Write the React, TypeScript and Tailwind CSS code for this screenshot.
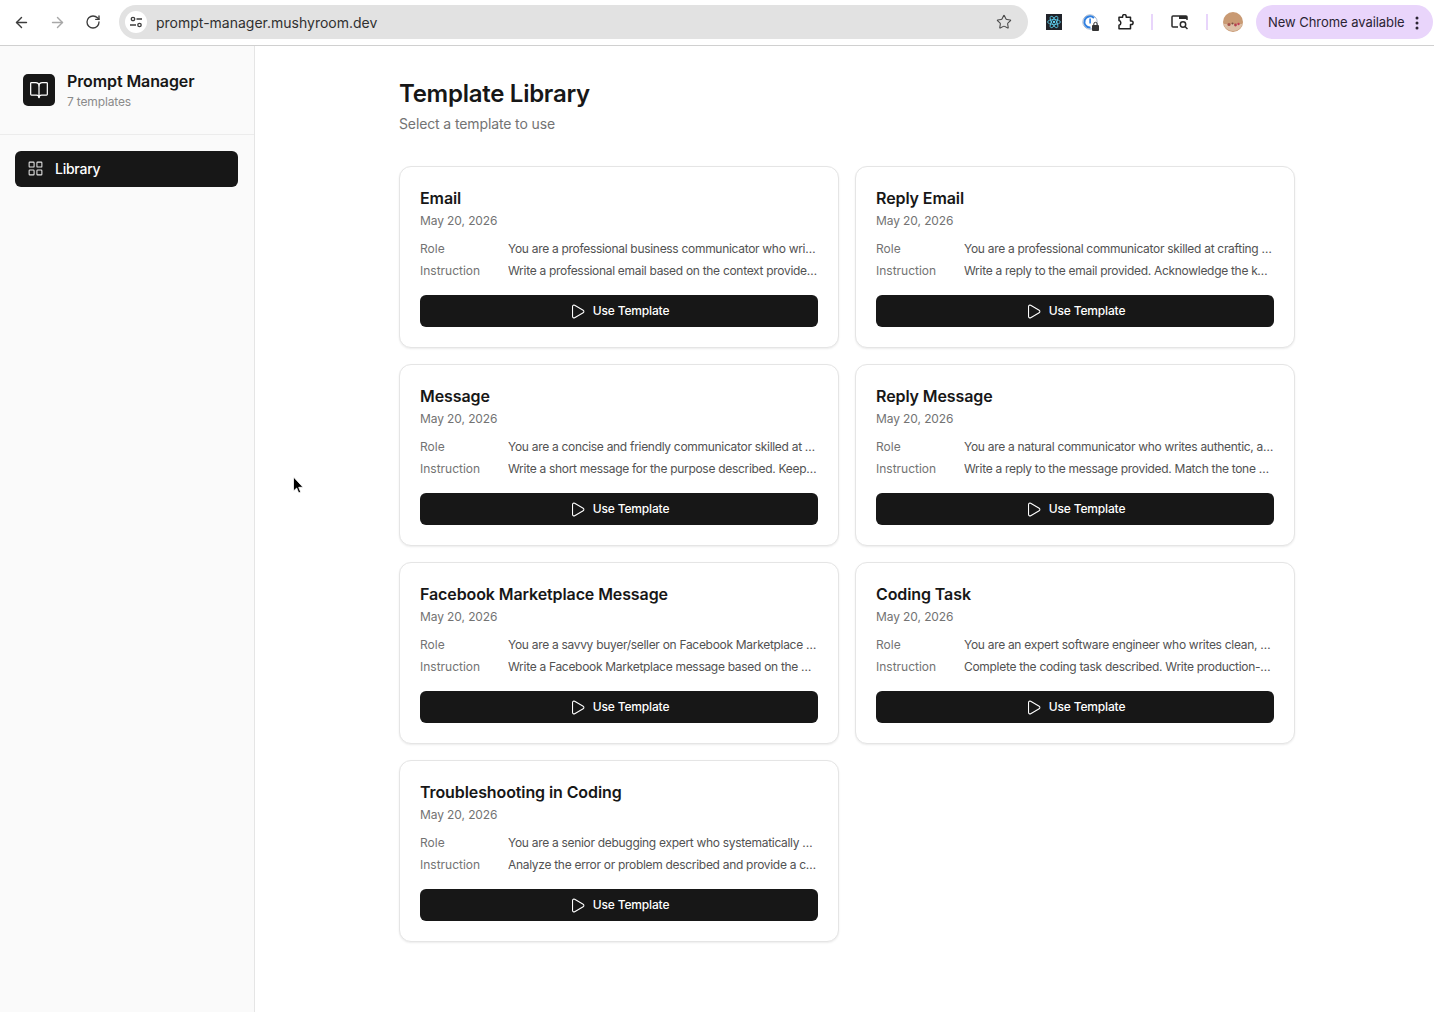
import { ArrowLeft, ArrowRight, RotateCw, Star, LayoutGrid, BookOpen, Play } from "lucide-react";

const templates = [
  { t: "Email", r: "You are a professional business communicator who writes clear emails", i: "Write a professional email based on the context provided below in full" },
  { t: "Reply Email", r: "You are a professional communicator skilled at crafting thoughtful replies", i: "Write a reply to the email provided. Acknowledge the key points raised" },
  { t: "Message", r: "You are a concise and friendly communicator skilled at writing messages", i: "Write a short message for the purpose described. Keep it brief and warm" },
  { t: "Reply Message", r: "You are a natural communicator who writes authentic, appropriate replies", i: "Write a reply to the message provided. Match the tone of the original" },
  { t: "Facebook Marketplace Message", r: "You are a savvy buyer/seller on Facebook Marketplace who writes messages", i: "Write a Facebook Marketplace message based on the details provided here" },
  { t: "Coding Task", r: "You are an expert software engineer who writes clean, maintainable code", i: "Complete the coding task described. Write production-ready code always" },
  { t: "Troubleshooting in Coding", r: "You are a senior debugging expert who systematically works through causes", i: "Analyze the error or problem described and provide a clear diagnosis now" },
];

function Card({ t, r, i }: { t: string; r: string; i: string }) {
  return (
    <div className="h-[182px] rounded-[12px] border border-[#e5e5e5] bg-white px-[20px] pt-[19px] shadow-[0_1px_2px_rgba(0,0,0,0.08)]">
      <div className="text-[16px] leading-[24px] font-semibold tracking-[-0.1px] text-[#171717]">{t}</div>
      <div className="text-[12px] leading-[16px] mt-[3px] tracking-[-0.1px] text-[#737373]">May 20, 2026</div>
      <div className="mt-[12px] grid grid-cols-[88px_1fr] gap-y-[6px] text-[12px] leading-[16px]">
        <div className="text-[#737373]">Role</div>
        <div className="truncate tracking-[-0.3px] text-[#525252]">{r}</div>
        <div className="text-[#737373]">Instruction</div>
        <div className="truncate tracking-[-0.3px] text-[#525252]">{i}</div>
      </div>
      <button className="mt-[16px] flex h-[32px] w-full items-center justify-center gap-[7px] rounded-[6px] bg-[#171717] text-[12px] font-medium tracking-[-0.15px] text-white">
        <Play size={17} strokeWidth={1.5} />
        Use Template
      </button>
    </div>
  );
}

export default function App() {
  return (
    <div className="relative flex h-[1012px] w-[1434px] flex-col overflow-hidden bg-white font-['Inter',sans-serif]">
      <header className="flex h-[46px] shrink-0 items-center border-b border-[#d0d0d0] bg-white pb-[1px] pl-[13px]">
        <ArrowLeft size={17} strokeWidth={2} className="text-[#3c3c3c]" />
        <ArrowRight size={17} strokeWidth={2} className="ml-[19px] text-[#a8a8a8]" />
        <RotateCw size={16} strokeWidth={2} className="ml-[19px] text-[#3c3c3c]" />
        <div className="ml-[18px] flex h-[34px] w-[909px] items-center rounded-full bg-[#e2e2e2] pl-[6px] pr-[16px]">
          <div className="flex h-[22px] w-[22px] items-center justify-center rounded-full bg-white">
            <svg width="14" height="14" viewBox="0 0 14 14" fill="none" stroke="#3c3c3c" strokeWidth="1.3">
              <circle cx="4" cy="4" r="1.7" />
              <path d="M7.5 4H13M1 10h6" />
              <circle cx="10.5" cy="10" r="1.7" />
            </svg>
          </div>
          <span className="ml-[9px] flex-1 text-[14px] text-[#303030]">prompt-manager.mushyroom.dev</span>
          <Star size={16} strokeWidth={1.6} className="text-[#4a4a4a]" />
        </div>
        <div className="ml-[18px] flex h-[16px] w-[16px] items-center justify-center bg-[#20232a]">
          <svg width="14" height="14" viewBox="-12 -12 24 24" fill="none" stroke="#61dafb" strokeWidth="1.3">
            <circle r="2" fill="#61dafb" stroke="none" />
            <ellipse rx="11" ry="4.2" />
            <ellipse rx="11" ry="4.2" transform="rotate(60)" />
            <ellipse rx="11" ry="4.2" transform="rotate(120)" />
          </svg>
        </div>
        <div className="relative ml-[20px] h-[16px] w-[16px]">
          <svg width="16" height="16" viewBox="0 0 16 16" fill="none">
            <circle cx="8" cy="8" r="7.2" stroke="#a9b8cc" strokeWidth="1" />
            <path d="M12 4A5.6 5.6 0 1 0 8.5 13.5" stroke="#2f7fe0" strokeWidth="2" />
            <rect x="7.3" y="4.5" width="1.6" height="5" fill="#2f7fe0" />
          </svg>
          <svg className="absolute -bottom-[1px] -right-[2px]" width="9" height="10" viewBox="0 0 9 10">
            <rect x="1" y="4" width="7" height="6" rx="1" fill="#333" />
            <path d="M2.8 4V3a1.7 1.7 0 0 1 3.4 0v1" fill="none" stroke="#333" strokeWidth="1" />
          </svg>
        </div>
        <svg className="ml-[20px]" width="16" height="16" viewBox="0 0 16 16" fill="none" stroke="#222" strokeWidth="1.5" strokeLinejoin="round">
          <path d="M1 3.2h3.6V2.4a1.8 1.8 0 0 1 3.6 0v.8h4.3v3.7h.8a1.8 1.8 0 0 1 0 3.6h-.8v4.3H1v-3.6a2.4 2.4 0 0 0 1.8-2.4A2.4 2.4 0 0 0 1 6.4z" />
        </svg>
        <div className="ml-[17px] h-[16px] w-[2px] bg-[#e8d5fb]" />
        <svg className="ml-[18px]" width="18" height="16" viewBox="0 0 18 16" fill="none" stroke="#2a2a2a" strokeWidth="1.5">
          <path d="M7 13H2a1 1 0 0 1-1-1V3a1 1 0 0 1 1-1h13a1 1 0 0 1 1 1v3" />
          <path d="M8 3.5h8" strokeWidth="3" />
          <circle cx="12" cy="10.5" r="2.7" />
          <path d="M14 12.5l2.5 2.5" />
        </svg>
        <div className="ml-[17px] h-[16px] w-[2px] bg-[#e8d5fb]" />
        <svg className="ml-[15px]" width="20" height="20" viewBox="0 0 20 20">
          <circle cx="10" cy="10" r="10" fill="#c99a73" />
          <path d="M0.5 12h19a10 10 0 0 1-19 0z" fill="#dcbfa6" />
          <circle cx="6" cy="12.5" r="1.6" fill="#a8524a" />
          <circle cx="12.5" cy="13" r="1.4" fill="#b33f4d" />
          <circle cx="15.5" cy="12" r="1.2" fill="#c23d55" />
          <circle cx="9.5" cy="11.5" r="1" fill="#7a5040" />
        </svg>
        <div className="ml-[13px] flex h-[34px] w-[177px] items-center rounded-full bg-[#e9d5fb] pl-[12px] pt-[1px] text-[13px] text-[#2b2433]">
          <span className="tracking-[-0.05px]">New Chrome available</span>
          <svg className="ml-[10px]" width="4" height="14" viewBox="0 0 4 14" fill="#2b2433">
            <circle cx="2" cy="2" r="1.5" />
            <circle cx="2" cy="7" r="1.5" />
            <circle cx="2" cy="12" r="1.5" />
          </svg>
        </div>
      </header>
      <div className="flex min-h-0 flex-1">
        <aside className="w-[255px] shrink-0 border-r border-[#e5e5e5] bg-[#fafafa]">
          <div className="flex h-[89px] items-center gap-[12px] border-b border-[#ececec] pl-[23px]">
            <div className="flex h-[32px] w-[32px] items-center justify-center rounded-[5px] bg-[#171717]">
              <BookOpen size={20} strokeWidth={1.5} className="text-white" />
            </div>
            <div className="pt-[1px]">
              <div className="text-[16px] leading-[22px] font-semibold tracking-[-0.1px] text-[#171717]">Prompt Manager</div>
              <div className="text-[12px] leading-[20px] tracking-[-0.15px] text-[#8a8a8a]">7 templates</div>
            </div>
          </div>
          <nav className="px-[15px] pt-[16px]">
            <div className="flex h-[36px] w-[223px] items-center gap-[11px] rounded-[6px] bg-[#171717] pb-[1px] pl-[12px] text-[14px] font-medium tracking-[-0.25px] text-white">
              <LayoutGrid size={17} strokeWidth={1.5} className="text-[#e5e5e5]" />
              Library
            </div>
          </nav>
        </aside>
        <main className="flex-1 pl-[144px] pt-[32px]">
          <div className="w-[896px]">
            <h1 className="text-[24px] leading-[32px] font-semibold tracking-[-0.27px] text-[#171717]">Template Library</h1>
            <p className="mt-[4px] text-[14px] leading-[20px] tracking-[-0.12px] text-[#737373]">Select a template to use</p>
            <div className="mt-[32px] grid grid-cols-2 gap-[16px]">
              {templates.map((x) => (
                <Card key={x.t} {...x} />
              ))}
            </div>
          </div>
        </main>
      </div>
      <svg className="absolute left-[290px] top-[475px]" width="16" height="22" viewBox="0 0 16 22">
        <path d="M3.5 2v14l3.2-3 2 5 2-.9-2-4.8h4.3z" fill="#000" stroke="#fff" strokeWidth="0.8" />
      </svg>
    </div>
  );
}
